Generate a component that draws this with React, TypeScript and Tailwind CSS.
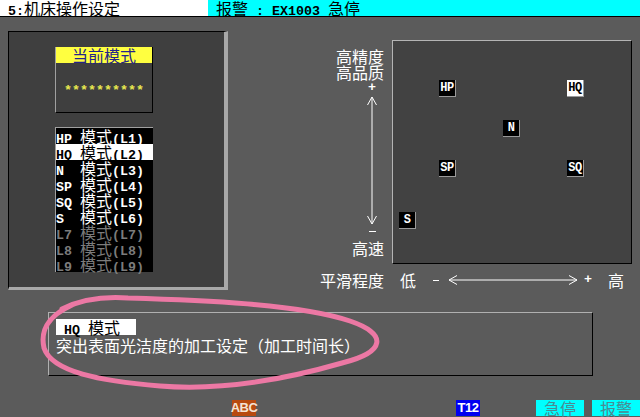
import type { ReactNode } from 'react';

// half-width ascii cells are 8px, CJK cells are 16px
const asc = "font-['Liberation_Mono'] text-[13.33px] font-bold whitespace-pre";

const A = ({ children }: { children: ReactNode }) => <span className={asc}>{children}</span>;

const modes = [
    { code: 'HP ', level: 'L1', active: true },
    { code: 'HQ ', level: 'L2', active: true },
    { code: 'N  ', level: 'L3', active: true },
    { code: 'SP ', level: 'L4', active: true },
    { code: 'SQ ', level: 'L5', active: true },
    { code: 'S  ', level: 'L6', active: true },
    { code: 'L7 ', level: 'L7', active: false },
    { code: 'L8 ', level: 'L8', active: false },
    { code: 'L9 ', level: 'L9', active: false },
];

const badges = [
    { label: 'HP', left: 46, top: 39 },
    { label: 'HQ', left: 174, top: 39, selected: true },
    { label: 'N', left: 110, top: 79 },
    { label: 'SP', left: 46, top: 119 },
    { label: 'SQ', left: 174, top: 119 },
    { label: 'S', left: 6, top: 171 },
];

const Badge = ({ label, left, top, selected }: { label: string; left: number; top: number; selected?: boolean }) => (
    <div
        className={`absolute w-[17px] h-[17px] flex items-center justify-center border-r border-b border-[#9a9a9a] font-['Liberation_Mono'] font-bold text-[12px] leading-none tracking-[-0.5px] ${
            selected ? 'bg-white text-black' : 'bg-black text-white'
        }`}
        style={{ left, top }}
    >
        {label}
    </div>
);

const App = () => {
    return (
        <div className="relative w-[640px] h-[417px] overflow-hidden bg-[#5b5b5b] text-white text-[16px] leading-[16px] font-['Noto_Sans_CJK_SC',sans-serif]">
            {/* Title bar */}
            <div className="flex h-[17px] border-b border-black text-black">
                <div className="w-[208px] bg-white pl-[8px] leading-[16px]">
                    <A>5:</A>机床操作设定
                </div>
                <div className="flex-1 bg-[#00ffff] pl-[8px] leading-[16px]">
                    报警<A> : EX1003 </A>急停
                </div>
            </div>

            {/* Main row */}
            <div className="flex mt-[14px]">
                {/* Left panel */}
                <div className="ml-[8px] w-[220px] h-[259px] bg-[#3f3f3f] border-t border-l border-t-black border-l-black border-r-[4px] border-b-[3px] border-r-[#a8a8a8] border-b-[#a8a8a8] pl-[46px] pt-[15px]">
                    <div className="w-[98px] h-[66px] border-l border-l-[#a0a0a0] border-r border-b border-r-black border-b-black">
                        <div className="h-[16px] bg-[#ffff40] text-[#24248c] text-center leading-[16px]">当前模式</div>
                        <div className="text-center text-[#e8e850] mt-[16px]">
                            <A>**********</A>
                        </div>
                    </div>
                    <div className="mt-[14px] w-[98px] bg-black border-t border-l border-[#a0a0a0]">
                        {modes.map((m) => (
                            <div
                                key={m.level}
                                className={`h-[16px] leading-[16px] ${
                                    m.code === 'HQ ' ? 'bg-white text-black' : m.active ? 'text-white' : 'text-[#7c7c7c]'
                                }`}
                            >
                                <A>{m.code}</A>模式<A>({m.level})</A>
                            </div>
                        ))}
                    </div>
                </div>

                {/* Right section */}
                <div className="ml-[92px] pt-[9px]">
                    <div className="flex">
                        {/* Vertical axis */}
                        <div className="w-[64px] flex flex-col items-end pt-[8px]">
                            <div className="leading-[16px]">高精度</div>
                            <div className="leading-[16px]">高品质</div>
                            <div className="h-[16px] w-[16px] mr-[4px] flex items-center justify-center">
                                <A>+</A>
                            </div>
                            <svg width="16" height="130" viewBox="0 0 16 130" className="mr-[4px]">
                                <line x1="8" y1="1" x2="8" y2="128" stroke="white" strokeWidth="1" />
                                <polyline points="3.5,9 8,1 12.5,9" fill="none" stroke="white" strokeWidth="1" />
                                <polyline points="3.5,120 8,128 12.5,120" fill="none" stroke="white" strokeWidth="1" />
                            </svg>
                            <div className="h-[10px] w-[16px] mr-[4px] flex items-center justify-center">
                                <div className="w-[7px] h-[1px] bg-white" />
                            </div>
                            <div className="mt-[4px] leading-[16px]">高速</div>
                        </div>

                        {/* Chart */}
                        <div className="relative ml-[8px] w-[240px] h-[224px] bg-[#424242] border-t border-l border-[#b4b4b4] border-r border-b border-r-black border-b-black">
                            {badges.map((b) => (
                                <Badge key={b.label} {...b} />
                            ))}
                        </div>
                    </div>

                    {/* Horizontal axis */}
                    <div className="flex items-center h-[16px] mt-[8px] leading-[16px]">
                        <div className="w-[64px]">平滑程度</div>
                        <div className="ml-[16px]">低</div>
                        <div className="ml-[16px] w-[8px] flex justify-center">
                            <div className="w-[6px] h-[1px] bg-white" />
                        </div>
                        <svg width="130" height="16" viewBox="0 0 130 16" className="ml-[8px]">
                            <line x1="1" y1="8" x2="129" y2="8" stroke="white" strokeWidth="1" />
                            <polyline points="9,3.5 1,8 9,12.5" fill="none" stroke="white" strokeWidth="1" />
                            <polyline points="121,3.5 129,8 121,12.5" fill="none" stroke="white" strokeWidth="1" />
                        </svg>
                        <div className="ml-[6px] w-[8px] flex justify-center">
                            <A>+</A>
                        </div>
                        <div className="ml-[16px]">高</div>
                    </div>
                </div>
            </div>

            {/* Mode description */}
            <div className="mt-[22px] ml-[48px] w-[545px] h-[64px] border-t border-l border-[#b0b0b0] border-r border-b border-r-black border-b-black pl-[7px] pt-[6px]">
                <div className="w-[80px] h-[16px] bg-white text-black leading-[16px]">
                    <A> HQ </A>模式
                </div>
                <div className="leading-[16px] mt-[2px]">突出表面光洁度的加工设定（加工时间长）</div>
            </div>

            {/* Status bar */}
            <div className="flex h-[16px] mt-[24px] leading-[16px]">
                <div className="ml-[232px] w-[24px] bg-[#b84a10] text-[#f4e4d4] flex items-center justify-center">
                    <span className="font-['Liberation_Sans'] font-bold text-[13px] tracking-[-0.5px]">ABC</span>
                </div>
                <div className="ml-[200px] w-[24px] bg-[#0000f0] text-white flex items-center justify-center">
                    <span className="font-['Liberation_Sans'] font-bold text-[13px] tracking-[-0.5px]">T12</span>
                </div>
                <div className="ml-[56px] w-[48px] bg-[#00ffff] text-[#4a8a92] text-center">急停</div>
                <div className="ml-[8px] w-[48px] bg-[#00ffff] text-[#4a8a92] text-center">报警</div>
            </div>

            {/* Hand-drawn highlight */}
            <svg className="absolute inset-0 pointer-events-none" width="640" height="417" viewBox="0 0 640 417">
                <path
                    d="M 62 309 C 80 300, 100 296, 128 298 C 200 300, 300 304, 350 321 C 388 334, 386 352, 342 363 C 290 378, 222 391, 160 386 C 100 381, 52 372, 44 348 C 40 330, 48 316, 72 305"
                    fill="none"
                    stroke="#ec78a4"
                    strokeWidth="5"
                    strokeLinecap="round"
                    strokeLinejoin="round"
                />
            </svg>
        </div>
    );
};

export default App;
